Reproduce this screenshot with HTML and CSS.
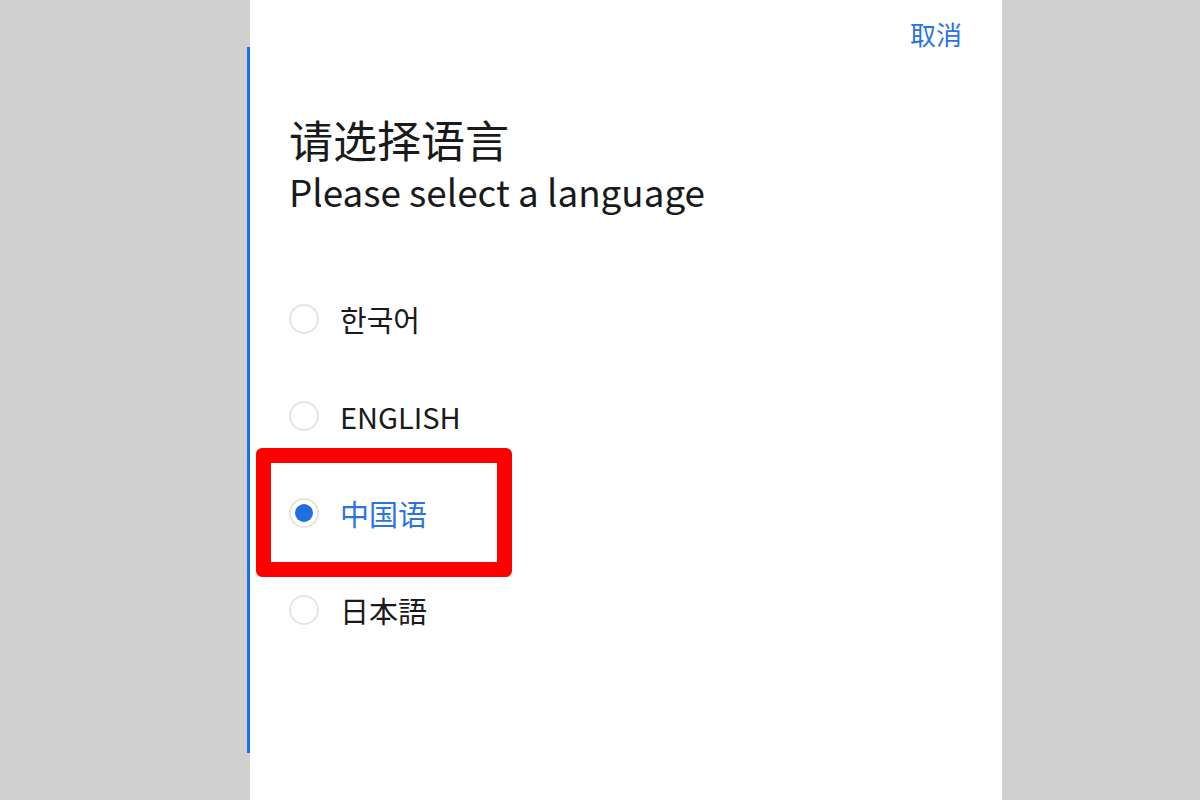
FILE: index.html
```html
<!DOCTYPE html>
<html lang="zh">
<head>
<meta charset="utf-8">
<title>Language</title>
<link rel="stylesheet" href="styles.css">
</head>
<body>
<div class="panel">
  <div class="header"><span class="cancel">取消</span></div>
  <div class="titles">
    <div class="title-zh">请选择语言</div>
    <div class="title-en">Please select a language</div>
  </div>
  <div class="options">
    <div class="row"><span class="radio"></span><span class="label" lang="ko">한국어</span></div>
    <div class="row"><span class="radio"></span><span class="label">ENGLISH</span></div>
    <div class="row selected"><span class="radio"><span class="dot"></span></span><span class="label">中国语</span></div>
    <div class="row"><span class="radio"></span><span class="label" lang="ja">日本語</span></div>
  </div>
</div>
</body>
</html>
```
FILE: styles.css
```css
html, body {
  margin: 0;
  padding: 0;
  background: #d0d0d0;
  height: 800px;
  overflow: hidden;
}
body {
  font-family: "Noto Sans CJK SC", "Noto Sans CJK KR", "Noto Sans CJK JP", sans-serif;
  color: #1a1a1a;
}
.panel {
  position: relative;
  width: 752px;
  height: 800px;
  margin-left: 250px;
  background: #ffffff;
  box-sizing: border-box;
  padding: 0 40px 0 39px;
}
.panel::before {
  content: "";
  position: absolute;
  left: -3px;
  top: 47px;
  bottom: 47px;
  width: 3px;
  background: #1874e0;
}
.header {
  display: flex;
  justify-content: flex-end;
  padding-top: 16px;
  height: 36px;
}
.cancel {
  font-size: 26px;
  line-height: 36px;
  color: #2a74e2;
}
.titles {
  margin-top: 60px;
}
.title-zh {
  font-size: 44px;
  line-height: 54px;
}
.title-en {
  font-size: 36.8px;
  line-height: 50px;
}
.options {
  margin-top: 54px;
  display: flex;
  flex-direction: column;
}
.row {
  position: relative;
  display: flex;
  align-items: center;
  gap: 21px;
  height: 97px;
}
.radio {
  width: 26px;
  height: 26px;
  border: 2px solid #e4e4e4;
  border-radius: 50%;
  display: flex;
  align-items: center;
  justify-content: center;
}
.dot {
  width: 18px;
  height: 18px;
  border-radius: 50%;
  background: #1f6fe0;
}
.label {
  font-size: 29px;
  line-height: 40px;
}
.selected .label {
  color: #2a74e2;
}
.selected::after {
  content: "";
  position: absolute;
  left: -33px;
  top: -16px;
  width: 226px;
  height: 99px;
  border: 15px solid #ff0000;
  border-radius: 6px;
}
```
